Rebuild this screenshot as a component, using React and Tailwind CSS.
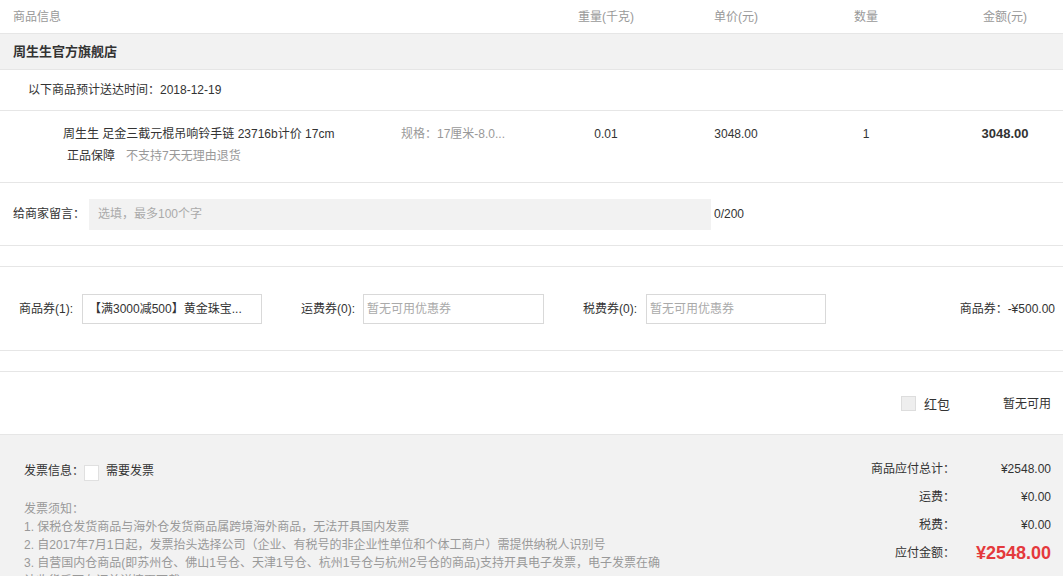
export default function App() {
  const font = { fontFamily: '"Liberation Sans", "Noto Sans CJK SC", sans-serif' }
  const line = 'border-b border-[#e6e6e6]'

  return (
    <div className="w-[1063px] h-[576px] overflow-hidden bg-white text-[12px] text-[#333]" style={font}>
      {/* table header */}
      <div className={`flex items-center h-[34px] text-[#999] ${line}`}>
        <div className="w-[541px] pl-[13px]">商品信息</div>
        <div className="w-[130px] text-center">重量(千克)</div>
        <div className="w-[130px] text-center">单价(元)</div>
        <div className="w-[130px] text-center">数量</div>
        <div className="flex-1 text-center pl-4">金额(元)</div>
      </div>

      {/* store */}
      <div className={`flex items-center h-[36px] bg-[#f2f2f2] pl-[13px] text-[13px] font-bold ${line}`}>
        周生生官方旗舰店
      </div>

      <div className={`flex items-center h-[41px] pl-[28px] ${line}`}>以下商品预计送达时间：2018-12-19</div>

      {/* product */}
      <div className={`flex h-[72px] pt-[15px] ${line}`}>
        <div className="w-[541px] flex">
          <div className="w-[401px] pl-[63px]">
            <div className="leading-[16px]">周生生 足金三截元棍吊响铃手链 23716b计价 17cm</div>
            <div className="flex gap-[11px] mt-[6px] pl-[4px] leading-[16px]">
              <span>正品保障</span>
              <span className="text-[#999]">不支持7天无理由退货</span>
            </div>
          </div>
          <div className="text-[#999] leading-[16px]">规格：17厘米-8.0...</div>
        </div>
        <div className="w-[130px] text-center leading-[16px]">0.01</div>
        <div className="w-[130px] text-center leading-[16px]">3048.00</div>
        <div className="w-[130px] text-center leading-[16px]">1</div>
        <div className="flex-1 text-center pl-4 leading-[16px] font-bold text-[13px]">3048.00</div>
      </div>

      {/* message */}
      <div className={`flex items-center h-[63px] ${line}`}>
        <div className="pl-[13px] w-[89px]">给商家留言：</div>
        <div className="w-[622px] h-[31px] bg-[#f2f2f2] flex items-center pl-[9px] text-[#aaa]">选填，最多100个字</div>
        <div className="pl-[3px]">0/200</div>
      </div>

      <div className={`h-[21px] ${line}`} />

      {/* coupons */}
      <div className={`flex items-center h-[84px] ${line}`}>
        <div className="pl-[19px] w-[82px]">商品券(1):</div>
        <div className="w-[180px] h-[30px] border border-[#d9d9d9] flex items-center pl-[6px]">【满3000减500】黄金珠宝...</div>
        <div className="pl-[39px] w-[101px]">运费券(0):</div>
        <div className="w-[181px] h-[30px] border border-[#d9d9d9] flex items-center pl-[3px] text-[#aaa]">暂无可用优惠券</div>
        <div className="pl-[39px] w-[102px]">税费券(0):</div>
        <div className="w-[180px] h-[30px] border border-[#d9d9d9] flex items-center pl-[3px] text-[#aaa]">暂无可用优惠券</div>
        <div className="flex-1 text-right pr-[8px]">商品券：-¥500.00</div>
      </div>

      <div className={`h-[21px] ${line}`} />

      {/* red envelope */}
      <div className={`flex items-center h-[63px] pt-[1px] ${line}`}>
        <div className="flex-1" />
        <div className="w-[15px] h-[15px] bg-[#eeeeee] border border-[#dddddd]" />
        <div className="ml-[8px] text-[13px] pt-[2px]">红包</div>
        <div className="ml-[53px] pr-[12px]">暂无可用</div>
      </div>

      {/* bottom */}
      <div className="flex bg-[#f2f2f2] h-[200px]">
        <div className="w-[700px] pl-[24px] pt-[27px]">
          <div className="flex items-center h-[18px]">
            <span>发票信息：</span>
            <span className="w-[15px] h-[16px] bg-white border border-[#e0e0e0] mt-[3px]" />
            <span className="ml-[7px]">需要发票</span>
          </div>
          <div className="mt-[20px] text-[#999] leading-[18px] w-[640px]">
            <div>发票须知：</div>
            <div>1. 保税仓发货商品与海外仓发货商品属跨境海外商品，无法开具国内发票</div>
            <div>2. 自2017年7月1日起，发票抬头选择公司（企业、有税号的非企业性单位和个体工商户）需提供纳税人识别号</div>
            <div>3. 自营国内仓商品(即苏州仓、佛山1号仓、天津1号仓、杭州1号仓与杭州2号仓的商品)支持开具电子发票，电子发票在确认收货后可在订单详情页下载</div>
          </div>
        </div>
        <div className="flex-1 pr-[12px] pt-[20px]">
          {[
            ['商品应付总计：', '¥2548.00'],
            ['运费：', '¥0.00'],
            ['税费：', '¥0.00'],
          ].map(([k, v]) => (
            <div key={k} className="flex items-center h-[28px]">
              <div className="flex-1 text-right">{k}</div>
              <div className="w-[96px] text-right">{v}</div>
            </div>
          ))}
          <div className="flex items-center h-[28px]">
            <div className="flex-1 text-right">应付金额：</div>
            <div className="w-[96px] text-right text-[18px] font-bold text-[#e4393c]">¥2548.00</div>
          </div>
        </div>
      </div>
    </div>
  )
}
